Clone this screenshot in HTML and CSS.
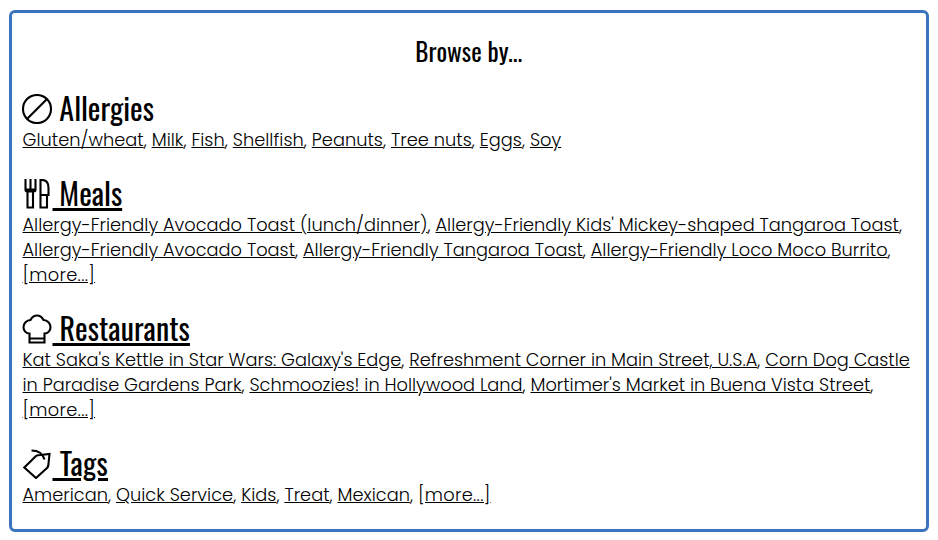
FILE: index.html
```html
<!DOCTYPE html>
<html lang="en">
<head>
<meta charset="utf-8">
<title>Browse by...</title>
<link rel="stylesheet" href="styles.css">
</head>
<body>
<main class="browse">
  <h1 class="title">Browse by...</h1>
  <section class="group allergies">
    <h2 class="heading"><svg class="icon" viewBox="0 0 30 30"><circle cx="15" cy="15" r="14"/><path d="M5 25 25 5"/></svg><span> Allergies</span></h2>
    <p class="links"><a href="#">Gluten/wheat</a>, <a href="#">Milk</a>, <a href="#">Fish</a>, <a href="#">Shellfish</a>, <a href="#">Peanuts</a>, <a href="#">Tree nuts</a>, <a href="#">Eggs</a>, <a href="#">Soy</a></p>
  </section>
  <section class="group meals">
    <h2 class="heading"><a href="#"><svg class="icon" viewBox="0 0 30 30"><path d="M3.500 0V10.500Q3.500 12.500 5 12.500H12Q13.500 12.500 13.500 10.500V0M8.500 0V12M3.500 10.500H13.500M5.500 12V28.500H11V12M18.500 28.500V1H20Q26.500 1 26.500 9V16H18.500M18.500 16V28.500H25V16"/></svg><span> Meals</span></a></h2>
    <p class="links"><a href="#">Allergy-Friendly Avocado Toast (lunch/dinner)</a>, <a href="#">Allergy-Friendly Kids' Mickey-shaped Tangaroa Toast</a>, <a href="#">Allergy-Friendly Avocado Toast</a>, <a href="#">Allergy-Friendly Tangaroa Toast</a>, <a href="#">Allergy-Friendly Loco Moco Burrito</a>, <a class="more" href="#">[more...]</a></p>
  </section>
  <section class="group restaurants">
    <h2 class="heading"><a href="#"><svg class="icon" viewBox="0 0 30 30"><path d="M7.500 28.500V19.500C4 19.500 1.500 16.500 1.500 13.200C1.500 9.500 4.500 6.300 8.500 6C10 3 12 1.500 15 1.500S20 3 21.500 6C25.500 6.300 28.500 9.500 28.500 13.200C28.500 16.500 26 19.500 22.500 19.500V28.500ZM7.500 24.500H22.500"/></svg><span> Restaurants</span></a></h2>
    <p class="links"><a href="#">Kat Saka's Kettle in Star Wars: Galaxy's Edge</a>, <a href="#">Refreshment Corner in Main Street, U.S.A</a>, <a href="#">Corn Dog Castle in Paradise Gardens Park</a>, <a href="#">Schmoozies! in Hollywood Land</a>, <a href="#">Mortimer's Market in Buena Vista Street</a>, <a class="more" href="#">[more...]</a></p>
  </section>
  <section class="group tags">
    <h2 class="heading"><a href="#"><svg class="icon" viewBox="0 0 30 30"><path d="M2.300 18.500 13.500 7.500Q14.500 6.500 16 6.200L27.500 5 26.300 16.500Q26 18 25 19L14 29ZM9.500 1.500Q20 1.500 22.500 10.500"/></svg><span> Tags</span></a></h2>
    <p class="links"><a href="#">American</a>, <a href="#">Quick Service</a>, <a href="#">Kids</a>, <a href="#">Treat</a>, <a href="#">Mexican</a>, <a class="more" href="#">[more...]</a></p>
  </section>
</main>
</body>
</html>
```
FILE: styles.css
```css
* { box-sizing: border-box; }
body { margin: 10px 9px; background: #fff; color: #000; font: 300 17.76px/25px Poppins, "Open Sans", sans-serif; }
.browse { height: 522px; border: 3px solid #3b74bc; border-radius: 6px; padding: 18px 10px 0 10.5px; }
.title { margin: 0 0 19px -1px; text-align: center; font: 380 25px/40px Oswald, "Roboto Condensed", sans-serif; letter-spacing: 0.05px; }
.group { margin-bottom: 23px; }
.heading { margin: 0 0 1px; font: 380 30px/36px Oswald, "Roboto Condensed", sans-serif; white-space: pre; }
.heading a { text-decoration-thickness: 3px; }
.restaurants .heading { letter-spacing: 0.12px; }
.tags .heading { letter-spacing: 0.3px; }
.links { margin: 0; }
.allergies .links { letter-spacing: 0.04px; }
.meals .links { letter-spacing: 0.02px; }
a { color: inherit; text-decoration: underline; }
.tags .links { letter-spacing: 0.02px; }
.links .more { letter-spacing: 0.32px; }
.icon { width: 30px; height: 30px; margin-left: -0.5px; margin-right: 0.5px; vertical-align: -3px; fill: none; stroke: currentColor; stroke-width: 2.1; }
```
